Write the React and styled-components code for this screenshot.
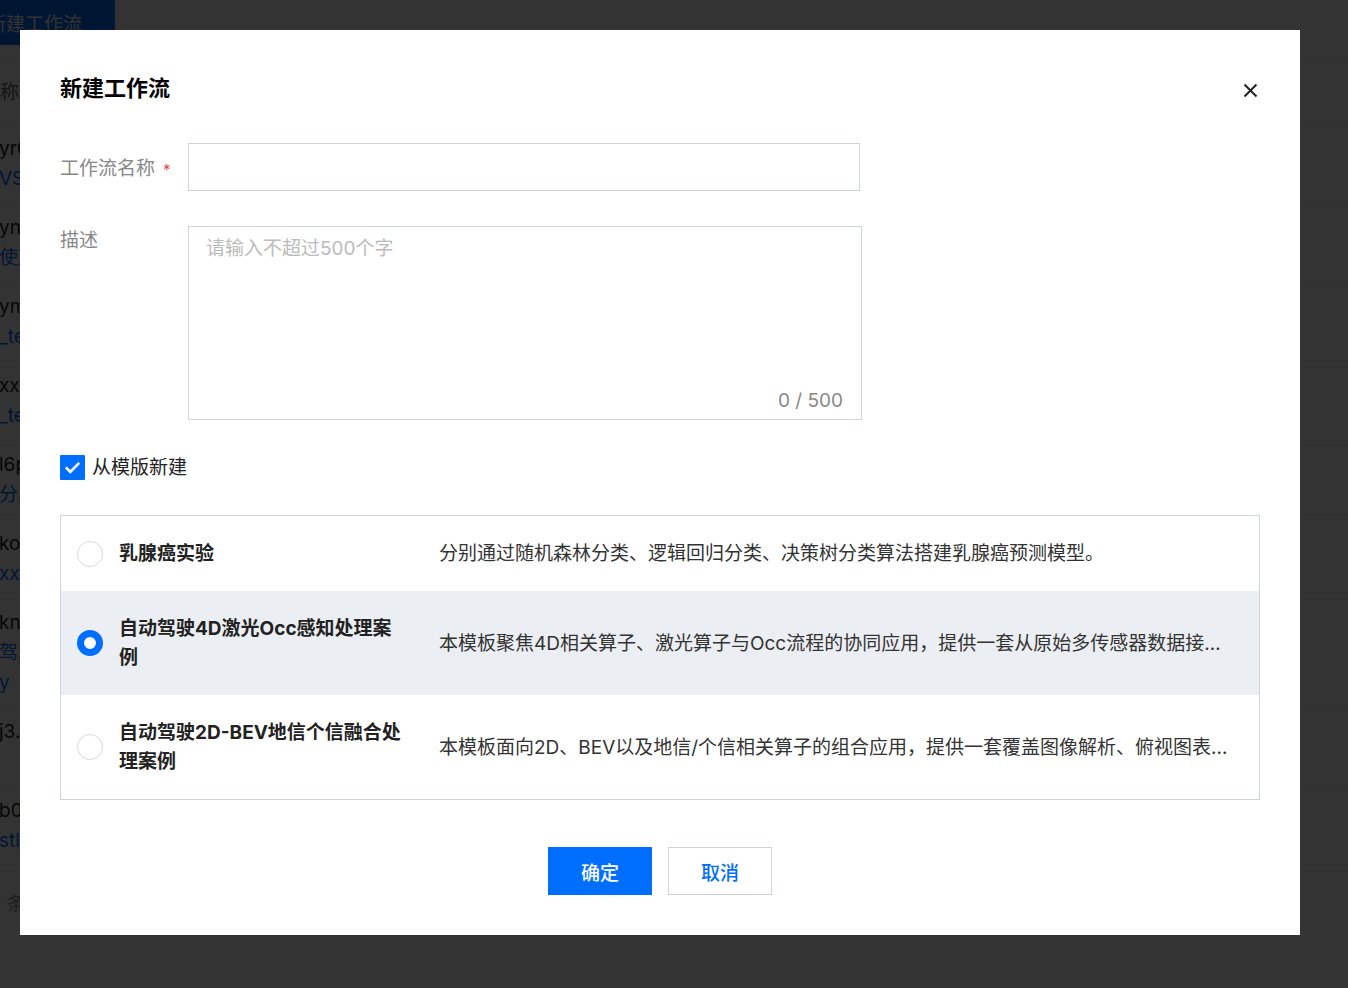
import React, { useState } from "react";
import styled, { createGlobalStyle } from "styled-components";

const GlobalStyle = createGlobalStyle`
  html, body {
    margin: 0;
    padding: 0;
    background: #fff;
  }
  body {
    font-family: Inter, "Noto Sans CJK SC", sans-serif;
    color: #222;
    overflow: hidden;
  }
  * {
    box-sizing: border-box;
  }
`;

// ---- page behind the dialog ----

const Page = styled.div`
  height: 988px;
  overflow: hidden;
  margin-left: -46px;
  font-size: 19px;
`;

const Toolbar = styled.div`
  height: 62px;
  border-bottom: 1px solid #e7eaef;
`;

const NewButton = styled.button`
  height: 45px;
  padding: 0 33px;
  border: 0;
  background: #006eff;
  color: #fff;
  font: inherit;
  font-size: 19px;
`;

const HeaderRow = styled.div`
  height: 63px;
  line-height: 30px;
  color: #666;
  border-bottom: 1px solid #e7eaef;
`;

const ListRow = styled.div`
  min-height: 79px;
  line-height: 30px;
  border-bottom: 1px solid #e7eaef;
`;

/* first column of the list; only its start peeks out left of the dialog */
const NameCell = styled.div`
  width: 66px;
  overflow: hidden;
  white-space: nowrap;
  padding: ${(p) => (p.head ? "16px 0 0 27px" : "9px 0 9px 45px")};
`;

const ListName = styled.div`
  color: #222;
`;

const ListSub = styled.div`
  color: #006eff;
`;

const Pager = styled.div`
  width: 66px;
  overflow: hidden;
  white-space: nowrap;
  padding: 24px 0 0 11px;
  line-height: 30px;
  color: #999;
`;

const Overlay = styled.div`
  position: fixed;
  inset: 0;
  background: rgba(0, 0, 0, 0.8);
`;

// ---- dialog ----

const Dialog = styled.div`
  position: fixed;
  left: 20px;
  top: 30px;
  width: 1280px;
  background: #fff;
  padding: 43px 40px 40px;
  font-size: 19px;
`;

const DialogHeader = styled.div`
  display: flex;
  justify-content: space-between;
  align-items: center;
`;

const Title = styled.h2`
  margin: 0;
  font-size: 22px;
  line-height: 30px;
  font-weight: 700;
  color: #000;
`;

const CloseButton = styled.button`
  width: 20px;
  height: 20px;
  padding: 0;
  border: 0;
  background: none;
  display: flex;
  align-items: center;
  justify-content: center;
  margin-top: 4px;
  cursor: pointer;
  color: #222;
`;

const Form = styled.div`
  margin-top: 40px;
  display: flex;
  flex-direction: column;
  gap: 35px;
`;

const FormRow = styled.div`
  display: flex;
  align-items: flex-start;
`;

const Label = styled.div`
  width: 128px;
  flex-shrink: 0;
  color: #888;
  height: ${(p) => (p.tall ? "48px" : "auto")};
  padding-top: ${(p) => (p.tall ? "3px" : "0")};
  line-height: ${(p) => (p.tall ? "45px" : "29px")};
`;

const Required = styled.span`
  color: #e54545;
  font-size: 15px;
  margin-left: 8px;
`;

const TextInput = styled.input`
  width: 672px;
  height: 48px;
  border: 1px solid #cfd5de;
  padding: 0 17px;
  font: inherit;
  font-size: 19px;
  outline: none;
`;

const TextareaBox = styled.div`
  width: 674px;
  height: 194px;
  border: 1px solid #cfd5de;
  padding: 7px 18px 4px 17px;
  display: flex;
  flex-direction: column;
`;

const Textarea = styled.textarea`
  flex: 1;
  border: 0;
  padding: 0;
  resize: none;
  outline: none;
  font: inherit;
  font-size: 19px;
  line-height: 29px;
  color: #222;

  &::placeholder {
    color: #bbb;
  }
`;

const Counter = styled.div`
  text-align: right;
  color: #888;
  line-height: 29px;
`;

const CheckRow = styled.label`
  margin-top: 33px;
  display: flex;
  align-items: center;
  gap: 7px;
  line-height: 29px;
  color: #222;
  cursor: pointer;
`;

const CheckBox = styled.span`
  width: 25px;
  height: 25px;
  border-radius: 1px;
  background: ${(p) => (p.checked ? "#006eff" : "#fff")};
  border: ${(p) => (p.checked ? "0" : "1px solid #cfd5de")};
  display: flex;
  align-items: center;
  justify-content: center;
`;

const TemplateTable = styled.div`
  margin-top: 33px;
  border: 1px solid #cfd5de;
`;

const TemplateRow = styled.div`
  display: flex;
  align-items: center;
  padding: 23px 24px 23px 16px;
  background: ${(p) => (p.selected ? "#ebeef2" : "#fff")};
  cursor: pointer;
`;

const Radio = styled.span`
  width: 26px;
  height: 26px;
  flex-shrink: 0;
  border-radius: 50%;
  background: #fff;
  border: ${(p) => (p.selected ? "7px solid #006eff" : "1px solid #d5dae2")};
  margin-right: 16px;
`;

const TemplateName = styled.div`
  width: 288px;
  flex-shrink: 0;
  font-weight: 700;
  line-height: 29px;
  color: #222;
`;

const TemplateDesc = styled.div`
  flex: 1;
  min-width: 0;
  margin-left: 32px;
  line-height: 29px;
  color: #333;
  white-space: nowrap;
  overflow: hidden;
  text-overflow: ellipsis;
`;

const Footer = styled.div`
  margin-top: 47px;
  display: flex;
  justify-content: center;
  gap: 16px;
`;

const Button = styled.button`
  width: 104px;
  height: 48px;
  font: inherit;
  font-size: 19px;
  font-weight: 500;
  cursor: pointer;
  background: ${(p) => (p.primary ? "#006eff" : "#fff")};
  color: ${(p) => (p.primary ? "#fff" : "#006eff")};
  border: ${(p) => (p.primary ? "0" : "1px solid #cfd5de")};
`;

const listRows = [
  ["yr0a3kfw", ["VS Code 工作流"]],
  ["yn7dk2pa", ["使用说明示例"]],
  ["ym9xq1sd", ["_test_flow"]],
  ["xx1b8c0e", ["_test_demo"]],
  ["l6pzr4wq", ["分身检测流程"]],
  ["ko3vn8ty", ["xxl_pipeline"]],
  ["kn5mw2ub", ["驾驶场景", "y"]],
  ["j3.4hd7s", ["\u00a0"]],
  ["b0q9kf6e", ["stl_demo"]],
];

const templates = [
  {
    id: "breast",
    name: "乳腺癌实验",
    desc: "分别通过随机森林分类、逻辑回归分类、决策树分类算法搭建乳腺癌预测模型。",
  },
  {
    id: "occ",
    name: "自动驾驶4D激光Occ感知处理案例",
    desc: "本模板聚焦4D相关算子、激光算子与Occ流程的协同应用，提供一套从原始多传感器数据接入到感知结果输出的完整处理链路。",
  },
  {
    id: "bev",
    name: "自动驾驶2D-BEV地信个信融合处理案例",
    desc: "本模板面向2D、BEV以及地信/个信相关算子的组合应用，提供一套覆盖图像解析、俯视图表征与多源信息融合的处理流程。",
  },
];

const CloseIcon = () => (
  <svg width="15" height="15" viewBox="0 0 15 15">
    <path d="M1.5 1.5 L13.5 13.5 M13.5 1.5 L1.5 13.5" stroke="currentColor" strokeWidth="2" />
  </svg>
);

const CheckIcon = () => (
  <svg width="17" height="13" viewBox="0 0 17 13">
    <path d="M1.8 6.4 L6.3 10.8 L15.2 1.8" fill="none" stroke="#fff" strokeWidth="2.6" />
  </svg>
);

export default function App() {
  const [fromTemplate, setFromTemplate] = useState(true);
  const [selected, setSelected] = useState("occ");
  const [desc, setDesc] = useState("");

  return (
    <>
      <GlobalStyle />
      <Page>
        <Toolbar>
          <NewButton>新建工作流</NewButton>
        </Toolbar>
        <HeaderRow>
          <NameCell head>名称</NameCell>
        </HeaderRow>
        {listRows.map(([name, sub]) => (
          <ListRow key={name}>
            <NameCell>
              <ListName>{name}</ListName>
              {sub.map((line) => (
                <ListSub key={line}>{line}</ListSub>
              ))}
            </NameCell>
          </ListRow>
        ))}
        <Pager>共 9 条</Pager>
      </Page>
      <Overlay />
      <Dialog>
        <DialogHeader>
          <Title>新建工作流</Title>
          <CloseButton aria-label="关闭">
            <CloseIcon />
          </CloseButton>
        </DialogHeader>

        <Form>
          <FormRow>
            <Label tall>
              工作流名称<Required>*</Required>
            </Label>
            <TextInput />
          </FormRow>
          <FormRow>
            <Label>描述</Label>
            <TextareaBox>
              <Textarea
                placeholder="请输入不超过500个字"
                maxLength={500}
                value={desc}
                onChange={(e) => setDesc(e.target.value)}
              />
              <Counter>{desc.length} / 500</Counter>
            </TextareaBox>
          </FormRow>
        </Form>

        <CheckRow onClick={() => setFromTemplate(!fromTemplate)}>
          <CheckBox checked={fromTemplate}>{fromTemplate && <CheckIcon />}</CheckBox>
          从模版新建
        </CheckRow>

        <TemplateTable>
          {templates.map((t) => (
            <TemplateRow
              key={t.id}
              selected={selected === t.id}
              onClick={() => setSelected(t.id)}
            >
              <Radio selected={selected === t.id} />
              <TemplateName>{t.name}</TemplateName>
              <TemplateDesc>{t.desc}</TemplateDesc>
            </TemplateRow>
          ))}
        </TemplateTable>

        <Footer>
          <Button primary>确定</Button>
          <Button>取消</Button>
        </Footer>
      </Dialog>
    </>
  );
}
